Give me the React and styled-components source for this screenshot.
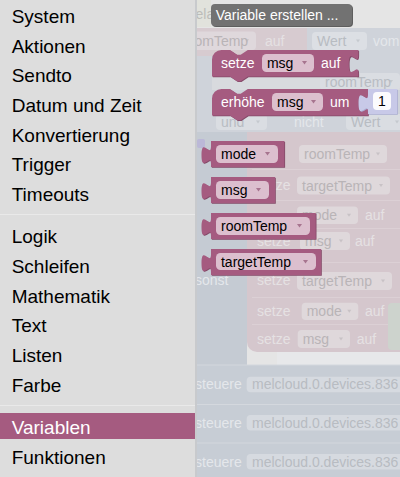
import React from 'react';
import styled, { createGlobalStyle } from 'styled-components';

const GlobalStyle = createGlobalStyle`
  html, body { margin: 0; padding: 0; background: #e4e4e4; overflow: hidden; }
  body { font-family: "Liberation Sans", Arial, sans-serif; }
`;

const Page = styled.div`
  display: flex;
  width: 400px;
  height: 477px;
  overflow: hidden;
  font-family: "Liberation Sans", Arial, sans-serif;
`;

const Toolbox = styled.nav`
  width: 197px;
  flex-shrink: 0;
  box-sizing: border-box;
  background: #ddd;
  border-right: 2px solid #c8cacd;
  display: flex;
  flex-direction: column;
  padding-top: 1.9px;
`;

const Row = styled.div`
  height: 26.1px;
  line-height: 30px;
  margin-bottom: 3.6px;
  padding-left: 11.7px;
  font-size: 19px;
  white-space: nowrap;
  flex-shrink: 0;
  color: ${(p) => (p.$selected ? '#fff' : '#000')};
  background: ${(p) => (p.$selected ? '#a55b80' : 'transparent')};
`;

const Separator = styled.div`
  height: 1px;
  flex-shrink: 0;
  background: #e9e9e9;
  margin: 4.5px 0 7.2px;
`;

const Workspace = styled.main`
  position: relative;
  flex: 1;
  overflow: hidden;
  background: #e4e4e4;
`;

const Canvas = styled.svg`
  position: absolute;
  left: 0;
  top: 0;
  font-family: "Liberation Sans", Arial, sans-serif;
  font-size: 14px;
`;

const Flyout = styled.div`
  position: relative;
  display: flex;
  flex-direction: column;
  align-items: flex-start;
  padding: 4px 0 0 14px;
`;

const FlyoutButton = styled.div`
  position: relative;
  box-sizing: border-box;
  width: 141px;
  height: 22px;
  padding-left: 4.7px;
  border-radius: 4px;
  background: #727272;
  box-shadow: 1px 1px 0 #5e5e5e;
  color: #fff;
  font-size: 14px;
  line-height: 22px;
  white-space: nowrap;
`;

const Block = styled.div`
  position: relative;
  display: flex;
  align-items: center;
  box-sizing: border-box;
  flex-shrink: 0;
  width: ${(p) => p.$w}px;
  height: ${(p) => p.$h}px;
  margin-top: ${(p) => p.$mt || 0}px;
  margin-left: ${(p) => p.$ml || 0}px;
  padding-left: ${(p) => p.$pl || 0}px;
`;

const BlockRow = styled.div`
  display: flex;
  align-items: flex-start;
  margin-top: ${(p) => p.$mt || 0}px;
`;

const ShapeSvg = styled.svg`
  position: absolute;
  left: 0;
  top: 0;
  overflow: visible;
`;

const Label = styled.span`
  position: relative;
  color: #fff;
  font-size: 14px;
  line-height: 1;
  white-space: nowrap;
  margin-left: ${(p) => p.$ml || 0}px;
  margin-right: ${(p) => p.$mr || 0}px;
`;

const Dropdown = styled.span`
  position: relative;
  display: flex;
  align-items: center;
  justify-content: space-between;
  box-sizing: border-box;
  width: ${(p) => p.$w}px;
  height: 17.7px;
  padding: 0 7.5px 0 5.3px;
  border-radius: 4.5px;
  background: #dcbfce;
  color: #000;
  font-size: 14px;
  line-height: 1;
  white-space: nowrap;
`;

const NumField = styled.span`
  position: relative;
  display: flex;
  align-items: center;
  justify-content: center;
  width: 18px;
  height: 18.3px;
  margin-left: 5px;
  border-radius: 4px;
  background: #fbfbfd;
  color: #000;
  font-size: 14px;
  line-height: 1;
`;

const TAB_DOWN = 'c 0,11.9 -9.5,-9.5 -9.5,8.9 s 9.5,-3 9.5,8.9';
const TAB_UP = 'c 0,-11.9 -9.5,9.5 -9.5,-8.9 s 9.5,3 9.5,-8.9';

const outputPath = (w, h) => `M0,0 H${w} V${h} H0 V23.1 ${TAB_UP} Z`;
const statementPath = (w, h) =>
  `M0,9.5 a9.5,9.5 0 0 1 9.5,-9.5 H18 l7.1,4.8 h3.6 l7.1,-4.8 H${w} V5.3 ${TAB_DOWN} V${h} H35.8 l-7.1,4.8 h-3.6 l-7.1,-4.8 H0 Z`;

function Shape({ w, h, kind, fill = '#a55b80', dark = '#844a68' }) {
  const d = kind === 'statement' ? statementPath(w, h) : outputPath(w, h);
  return (
    <ShapeSvg width={w} height={h}>
      <path d={d} fill={dark} transform="translate(0.8,0.8)" />
      <path d={d} fill={fill} />
    </ShapeSvg>
  );
}

function Arrow() {
  return (
    <svg width="5" height="4" viewBox="0 0 5 4" style={{ flexShrink: 0 }}>
      <path d="M0,0 H5 L2.5,3.6 Z" fill="#a7748f" />
    </svg>
  );
}

function Drop({ w, children }) {
  return (
    <Dropdown $w={w}>
      <span>{children}</span>
      <Arrow />
    </Dropdown>
  );
}

function Getter({ name, w, fw, mt }) {
  return (
    <Block $w={w} $h={26} $pl={4.7} $mt={mt}>
      <Shape w={w} h={26} kind="output" />
      <Drop w={fw}>{name}</Drop>
    </Block>
  );
}

const categories1 = ['System', 'Aktionen', 'Sendto', 'Datum und Zeit', 'Konvertierung', 'Trigger', 'Timeouts'];
const categories2 = ['Logik', 'Schleifen', 'Mathematik', 'Text', 'Listen', 'Farbe'];
const categories3 = ['Variablen', 'Funktionen'];

const PK = '#d5c7cd';
const PKF = '#dfd8db';
const PKT = '#b9b4b7';
const PKW = '#e5e1e3';
const BL = '#c5cbd3';
const BLF = '#d6dae0';
const BLT = '#b8bcc2';
const BLW = '#e4e7eb';

function FadedDrop({ x, y, w, h = 18, text, fill = PKF, color = PKT }) {
  return (
    <g>
      <rect x={x} y={y} width={w} height={h} rx="4" fill={fill} />
      <text x={x + 5} y={y + h / 2 + 5} fill={color}>{text}</text>
      <path d={`M${x + w - 11},${y + h / 2 - 1.5} h4 l-2,3 z`} fill={color} opacity="0.6" />
    </g>
  );
}

function Background() {
  return (
    <Canvas width="203" height="477" viewBox="197 0 203 477">
      <rect x="197" y="0" width="203" height="477" fill="#e5e5e5" />
      {/* top-left remnants */}
      <rect x="190" y="0" width="21" height="27" fill="#e1e2dc" />
      <text x="195.5" y="19" fill="#bcbcb9">ela</text>

      {/* top band */}
      <rect x="190" y="28" width="117" height="28" fill="#d7cbd0" />
      <rect x="307" y="28" width="93" height="28" fill="#cfd3da" />
      <FadedDrop x={177} y={31.5} w={79} h={18.5} text="roomTemp" fill="#dfd8dc" />
      <text x="265" y="46" fill={PKW}>auf</text>
      <FadedDrop x={312} y={32} w={55} h={18} text="Wert" fill="#dcdfe4" color={BLT} />
      <text x="373" y="46" fill={BLW}>vom</text>

      {/* middle band */}
      <rect x="190" y="56" width="210" height="76" fill="#cfd3da" />
      <rect x="212" y="76" width="188" height="14" fill="#d8dade" />
      <FadedDrop x={320} y={73} w={80} h={17} text="roomTemp" fill="#dadde2" color={BLT} />
      <FadedDrop x={216} y={114} w={51} h={16} text="und" fill="#dadde2" color={BLT} />
      <text x="294" y="127" fill={BLW}>nicht</text>
      <FadedDrop x={346} y={114} w={60} h={16} text="Wert" fill="#dadde2" color={BLT} />

      {/* if / else block */}
      <rect x="190" y="132" width="57" height="233" fill={BL} />
      <rect x="197" y="139" width="8" height="9" rx="2" fill="#bbb8d7" />
      <path d="M247,132 H400 V352 H257 A10,10 0 0 1 247,342 Z" fill={PK} />
      {[169, 200, 228, 262, 297, 324].map((y) => (
        <rect key={y} x="252" y={y} width="148" height="1" fill="#dcd0d5" />
      ))}
      <FadedDrop x={299} y={145} w={88} text="roomTemp" />
      <text x="257" y="190" fill={PKW}>setze</text>
      <FadedDrop x={297} y={176.5} w={93} text="targetTemp" />
      <FadedDrop x={297} y={206.5} w={61} h={17.5} text="mode" />
      <text x="365" y="220" fill={PKW}>auf</text>
      <text x="257" y="246" fill={PKW}>setze</text>
      <FadedDrop x={300} y={232} w={50} text="msg" />
      <text x="355" y="246" fill={PKW}>auf</text>

      <text x="195" y="285" fill={BLW}>sonst</text>
      <text x="257" y="285" fill={PKW}>setze</text>
      <FadedDrop x={297} y={272} w={95} text="targetTemp" />
      <text x="257" y="316" fill={PKW}>setze</text>
      <FadedDrop x={301.7} y={302.7} w={56.6} h={17.3} text="mode" />
      <text x="365" y="316" fill={PKW}>auf</text>
      <text x="257" y="344" fill={PKW}>setze</text>
      <FadedDrop x={297.7} y={330} w={52.3} text="msg" />
      <text x="356.7" y="344" fill={PKW}>auf</text>
      <rect x="388" y="303" width="16" height="47" rx="4" fill="#cdd3cd" />

      <rect x="277" y="352" width="123" height="13" fill="#e7e8ea" />

      {/* steuere blocks */}
      <rect x="190" y="365" width="210" height="112" fill="#c7cdd5" />
      {[364.5, 404, 442.5].map((y) => (
        <rect key={y} x="190" y={y} width="210" height="1" fill="#d4d8de" />
      ))}
      {[376.7, 415, 454].map((y) => (
        <g key={y}>
          <text x="195" y={y + 12.5} fill={BLW}>steuere</text>
          <rect x="246.7" y={y} width="170" height="15.6" rx="4" fill={BLF} />
          <text x="252" y={y + 12.5} fill={BLT}>melcloud.0.devices.836</text>
        </g>
      ))}
    </Canvas>
  );
}

export default function App() {
  return (
    <Page>
      <GlobalStyle />
      <Toolbox>
        {categories1.map((c) => (
          <Row key={c}>{c}</Row>
        ))}
        <Separator />
        {categories2.map((c) => (
          <Row key={c}>{c}</Row>
        ))}
        <Separator />
        {categories3.map((c) => (
          <Row key={c} $selected={c === 'Variablen'}>{c}</Row>
        ))}
      </Toolbox>
      <Workspace>
        <Background />
        <Flyout>
          <FlyoutButton>Variable erstellen ...</FlyoutButton>
          <Block $w={146.3} $h={26.5} $pl={9} $ml={1} $mt={23.5}>
            <Shape w={146.3} h={26.5} kind="statement" />
            <Label $mr={7.2}>setze</Label>
            <Drop w={52.6}>msg</Drop>
            <Label $ml={6.7}>auf</Label>
          </Block>
          <BlockRow $mt={12.5}>
            <Block $w={156} $h={26.5} $pl={9} $ml={1}>
              <Shape w={156} h={26.5} kind="statement" />
              <Label $mr={7.1}>erhöhe</Label>
              <Drop w={51.6}>msg</Drop>
              <Label $ml={6.7}>um</Label>
            </Block>
            <Block $w={29} $h={25} $pl={0}>
              <Shape w={29} h={25} kind="output" fill="#c8c9e8" dark="#abadd2" />
              <NumField>1</NumField>
            </Block>
          </BlockRow>
          <Getter name="mode" w={73.3} fw={62} mt={26} />
          <Getter name="msg" w={64} fw={53.3} mt={10} />
          <Getter name="roomTemp" w={104.7} fw={94.3} mt={10} />
          <Getter name="targetTemp" w={110} fw={100} mt={9.5} />
        </Flyout>
      </Workspace>
    </Page>
  );
}
